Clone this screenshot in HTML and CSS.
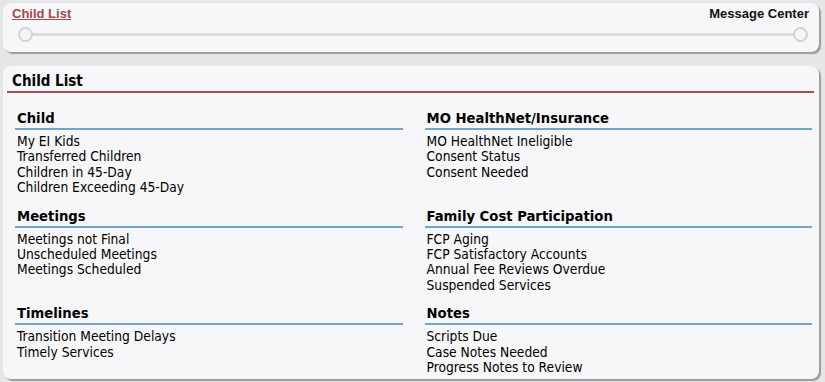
FILE: index.html
```html
<!DOCTYPE html>
<html>
<head>
<meta charset="utf-8">
<link rel="stylesheet" href="styles.css">
</head>
<body>
<div class="topbar">
  <div class="topbar-labels">
    <a class="crumb" href="#">Child List</a>
    <span class="msg">Message Center</span>
  </div>
  <div class="track">
    <span class="knob"></span>
    <span class="line"></span>
    <span class="knob"></span>
  </div>
</div>
<div class="panel">
  <h1 class="panel-title">Child List</h1>
  <div class="grid">
    <section class="sec">
      <h2>Child</h2>
      <ul>
        <li>My EI Kids</li>
        <li>Transferred Children</li>
        <li>Children in 45-Day</li>
        <li>Children Exceeding 45-Day</li>
      </ul>
    </section>
    <section class="sec">
      <h2>MO HealthNet/Insurance</h2>
      <ul>
        <li>MO HealthNet Ineligible</li>
        <li>Consent Status</li>
        <li>Consent Needed</li>
      </ul>
    </section>
    <section class="sec">
      <h2>Meetings</h2>
      <ul>
        <li>Meetings not Final</li>
        <li>Unscheduled Meetings</li>
        <li>Meetings Scheduled</li>
      </ul>
    </section>
    <section class="sec">
      <h2>Family Cost Participation</h2>
      <ul>
        <li>FCP Aging</li>
        <li>FCP Satisfactory Accounts</li>
        <li>Annual Fee Reviews Overdue</li>
        <li>Suspended Services</li>
      </ul>
    </section>
    <section class="sec">
      <h2>Timelines</h2>
      <ul>
        <li>Transition Meeting Delays</li>
        <li>Timely Services</li>
      </ul>
    </section>
    <section class="sec">
      <h2>Notes</h2>
      <ul>
        <li>Scripts Due</li>
        <li>Case Notes Needed</li>
        <li>Progress Notes to Review</li>
      </ul>
    </section>
  </div>
</div>
</body>
</html>
```
FILE: styles.css
```css
html, body {
  margin: 0;
  padding: 0;
}
body {
  background: #e6e6e6;
  padding: 3px 3px 0 3px;
  font-family: "DejaVu Sans Condensed", "DejaVu Sans", sans-serif;
  color: #000;
  height: 382px;
  box-sizing: border-box;
  overflow: hidden;
}
.topbar {
  background: #f7f7f9;
  border-radius: 8px;
  box-shadow: 2px 2px 1px #9c9c9c;
  height: 49px;
  box-sizing: border-box;
  padding: 3px 10px 0 9px;
  margin-right: 3px;
}
.topbar-labels {
  display: flex;
  justify-content: space-between;
  align-items: baseline;
  font-family: "Liberation Sans", Arial, sans-serif;
  font-weight: bold;
  font-size: 13px;
  line-height: 16px;
}
.crumb {
  color: #a5494a;
  text-decoration: underline;
}
.msg {
  color: #111;
}
.track {
  display: flex;
  align-items: center;
  margin-top: 5px;
  padding: 0 1px 0 6px;
}
.knob {
  width: 11px;
  height: 11px;
  border: 2px solid #d2d2d2;
  border-radius: 50%;
  background: #f5f5f6;
  flex: none;
}
.line {
  flex: 1;
  height: 3px;
  background: #dcdcdc;
}
.panel {
  margin-top: 14px;
  margin-right: 3px;
  background: #f7f7f9;
  border-radius: 8px;
  box-shadow: 2px 2px 1px #9c9c9c;
  height: 313px;
  box-sizing: border-box;
  padding: 6px 5px 0 4px;
}
.panel-title {
  margin: 0;
  font-size: 15px;
  font-weight: bold;
  line-height: 19px;
  padding: 0 0 0 5px;
  border-bottom: 2px solid #a05252;
}
.grid {
  display: grid;
  grid-template-columns: 1fr 1fr;
  column-gap: 22px;
  padding: 16px 2px 0 8px;
}
.sec {
  margin-bottom: 11px;
}
.sec h2 {
  margin: 0;
  font-size: 14.7px;
  font-weight: bold;
  line-height: 18px;
  padding: 0 0 1px 2px;
  border-bottom: 2px solid #6fa7cc;
}
.sec ul {
  list-style: none;
  margin: 0;
  padding: 4px 0 0 2px;
  font-size: 13.7px;
  line-height: 15.4px;
}
```
